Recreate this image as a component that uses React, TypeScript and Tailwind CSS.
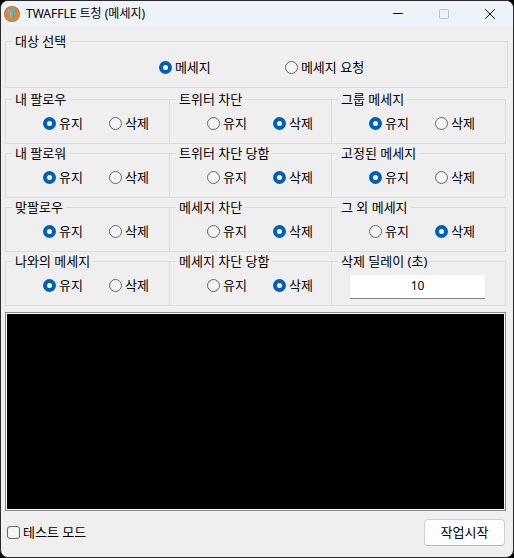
import { useState } from "react";

type Choice = { value: string; label: string };

const KEEP_OR_DELETE: Choice[] = [
	{ value: "keep", label: "유지" },
	{ value: "delete", label: "삭제" },
];

const FILTERS = [
	{ id: "following", title: "내 팔로우", initial: "keep" },
	{ id: "blocking", title: "트위터 차단", initial: "delete" },
	{ id: "group", title: "그룹 메세지", initial: "keep" },
	{ id: "follower", title: "내 팔로워", initial: "keep" },
	{ id: "blocked", title: "트위터 차단 당함", initial: "delete" },
	{ id: "pinned", title: "고정된 메세지", initial: "keep" },
	{ id: "mutual", title: "맞팔로우", initial: "keep" },
	{ id: "dm-blocking", title: "메세지 차단", initial: "delete" },
	{ id: "others", title: "그 외 메세지", initial: "delete" },
	{ id: "self", title: "나와의 메세지", initial: "keep" },
	{ id: "dm-blocked", title: "메세지 차단 당함", initial: "delete" },
];

const Radio = ({ name, choice, checked, onChange, className }: {
	name: string;
	choice: Choice;
	checked: boolean;
	onChange: (value: string) => void;
	className: string;
}) => (
	<label className={`flex items-center gap-[3px] whitespace-nowrap ${className}`}>
		<input
			type="radio"
			name={name}
			value={choice.value}
			checked={checked}
			onChange={() => onChange(choice.value)}
			className="size-[13px] shrink-0 appearance-none rounded-full border border-[#666666] bg-[#f5f5f5] checked:border-4 checked:border-[#005fb8] checked:bg-white"
		/>
		{choice.label}
	</label>
);

const Legend = ({ children }: { children: string }) => (
	<legend className="px-[3px] leading-[15px] whitespace-nowrap">{children}</legend>
);

const FilterGroup = ({ id, title, initial }: { id: string; title: string; initial: string }) => {
	const [value, setValue] = useState<string>(initial);

	return (
		<fieldset className="-ml-px min-w-0 border border-[#dcdcdc] px-[6px]">
			<Legend>{title}</Legend>
			<div className="flex pt-2 pb-[11px] pl-[31px] leading-[17px]">
				{KEEP_OR_DELETE.map((choice) => (
					<Radio
						key={choice.value}
						name={id}
						choice={choice}
						checked={value === choice.value}
						onChange={setValue}
						className="w-[66px] last:w-auto"
					/>
				))}
			</div>
		</fieldset>
	);
};

const TitleBar = () => (
	<header className="flex h-[25px] items-center bg-[#eef3fa]">
		<svg className="ml-[3px] size-4" viewBox="0 0 16 16" aria-hidden="true">
			<circle cx="8" cy="8" r="8" fill="#b9722f" />
			<circle cx="8" cy="8" r="7.2" fill="#e08d3a" />
			<path
				d="M3 3.5v9M6 1.5v13M10 1.5v13M13 3.5v9M3.5 3h9M1.5 6h13M1.5 10h13M3.5 13h9"
				stroke="#c97a30"
				strokeWidth="0.4"
			/>
			<text x="8" y="12" textAnchor="middle" fontSize="11" fontWeight="700" fontFamily="DejaVu Sans" fill="#22c3fb" stroke="#22c3fb" strokeWidth="0.3">T</text>
		</svg>
		<h1 className="ml-[6px] text-[12px]">TWAFFLE 트청 (메세지)</h1>
		<div className="ml-auto flex h-full">
			<button type="button" aria-label="최소화" className="grid w-[46px] place-items-center">
				<svg className="size-[10px]" viewBox="0 0 10 10"><path d="M0 4.5h10" stroke="#000" /></svg>
			</button>
			<button type="button" aria-label="최대화" disabled className="grid w-[46px] place-items-center">
				<svg className="size-[10px]" viewBox="0 0 10 10"><rect x="0.5" y="0.5" width="9" height="9" rx="1" fill="none" stroke="#bfc3c8" /></svg>
			</button>
			<button type="button" aria-label="닫기" className="grid w-[46px] place-items-center">
				<svg className="size-[10px]" viewBox="0 0 10 10"><path d="M0 0l10 10M10 0l-10 10" stroke="#000" /></svg>
			</button>
		</div>
	</header>
);

const App = () => {
	const [target, setTarget] = useState<string>("message");
	const [delay, setDelay] = useState<string>("10");
	const [testMode, setTestMode] = useState<boolean>(false);

	return (
		<div className="flex min-h-screen flex-col bg-black font-['Noto_Sans','Noto_Sans_CJK_KR',sans-serif] text-[13px] text-black">
			<div className="flex flex-1 flex-col overflow-hidden rounded-lg border border-[#2b2b30] bg-[#efefef]">
				<TitleBar />

				<main className="flex flex-1 flex-col pt-2 pr-[7px] pb-[11px] pl-1">
					<fieldset className="-mr-[2px] border border-[#dcdcdc] px-[6px]">
						<Legend>대상 선택</Legend>
						<div className="flex justify-center pt-[10px] pb-[11px] pl-[10px] leading-[17px]">
							<Radio
								name="target"
								choice={{ value: "message", label: "메세지" }}
								checked={target === "message"}
								onChange={setTarget}
								className="w-[126px]"
							/>
							<Radio
								name="target"
								choice={{ value: "request", label: "메세지 요청" }}
								checked={target === "request"}
								onChange={setTarget}
								className=""
							/>
						</div>
					</fieldset>

					<div className="mt-1 ml-px grid grid-cols-[164fr_162fr_174fr] gap-y-[2px]">
						{FILTERS.map((filter) => (
							<FilterGroup key={filter.id} {...filter} />
						))}
						<fieldset className="-ml-px min-w-0 border border-[#dcdcdc] px-[6px]">
							<Legend>삭제 딜레이 (초)</Legend>
							<div className="pt-[5px] pr-[13px] pl-[11px]">
								<input
									type="text"
									aria-label="삭제 딜레이 (초)"
									value={delay}
									onChange={(event) => setDelay(event.target.value)}
									className="block h-[25px] w-full rounded-xs border border-[#ececec] border-b-[#868686] bg-white pb-[2px] text-center text-[12px] outline-none"
								/>
							</div>
						</fieldset>
					</div>

					<textarea
						readOnly
						aria-label="작업 로그"
						className="mt-[6px] block w-full flex-1 resize-none border border-[#828790] bg-black p-1 text-white outline-1 -outline-offset-2 outline-white"
					/>

					<div className="mt-2 flex items-center justify-between pr-px pl-[2px]">
						<label className="flex items-center gap-[3px]">
							<input
								type="checkbox"
								checked={testMode}
								onChange={(event) => setTestMode(event.target.checked)}
								className="size-[13px] appearance-none rounded-[3px] border border-[#666666] bg-[#f5f5f5] checked:border-[#005fb8] checked:bg-[#005fb8]"
							/>
							테스트 모드
						</label>
						<button
							type="button"
							className="h-[27px] w-[81px] rounded border border-[#d0d0d0] border-b-[#bababa] bg-[#fdfdfd]"
						>
							작업시작
						</button>
					</div>
				</main>
			</div>
		</div>
	);
};

export default App;
